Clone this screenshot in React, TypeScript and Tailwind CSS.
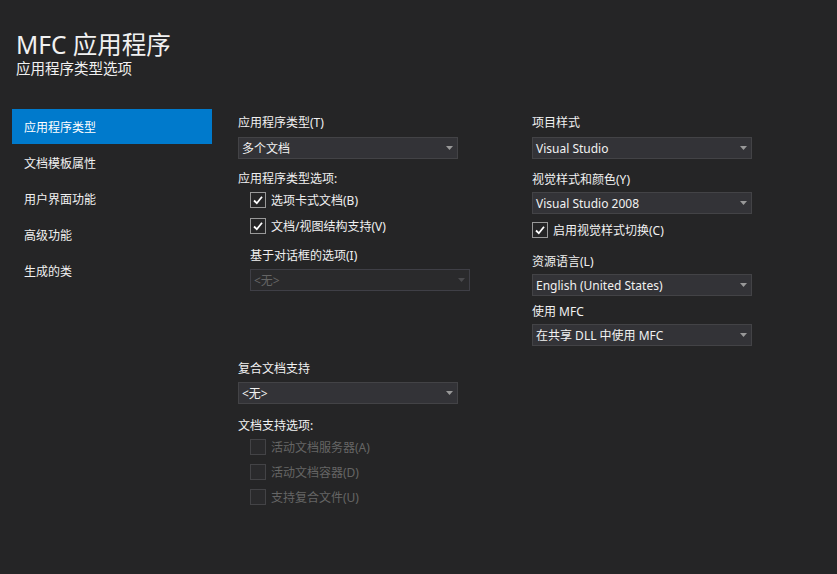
import React from 'react';

const FONT = { fontFamily: '"Noto Sans", "Noto Sans CJK SC", sans-serif' };

const Arrow: React.FC<{ disabled?: boolean }> = ({ disabled }) => (
  <svg width="7" height="4" viewBox="0 0 7 4" className="shrink-0">
    <polygon points="0,0 7,0 3.5,4" fill={disabled ? '#4a4a4d' : '#999999'} />
  </svg>
);

const Combo: React.FC<{ value: string; disabled?: boolean; className?: string }> = ({ value, disabled, className = '' }) => (
  <div
    className={`flex h-[22px] w-[220px] items-center justify-between border pl-[3px] pr-[4px] text-[12px] ${
      disabled ? 'border-[#3f3f46] bg-[#2a2a2c] text-[#656565]' : 'border-[#434346] bg-[#333337] text-[#f1f1f1]'
    } ${className}`}
  >
    <span className="pt-[2px] leading-[16px]">{value}</span>
    <Arrow disabled={disabled} />
  </div>
);

const Check: React.FC<{ label: string; checked?: boolean; disabled?: boolean; className?: string }> = ({
  label,
  checked,
  disabled,
  className = '',
}) => (
  <div className={`flex h-4 items-center gap-[5px] ${className}`}>
    <div
      className={`flex h-4 w-4 shrink-0 items-center justify-center border ${
        disabled ? 'border-[#434346] bg-[#2a2a2c]' : 'border-[#999999] bg-[#252526]'
      }`}
    >
      {checked && (
        <svg width="14" height="14" viewBox="0 0 14 14">
          <path d="M3 7.5 L5.8 10.2 L11 3.8" fill="none" stroke="#ffffff" strokeWidth="1.8" />
        </svg>
      )}
    </div>
    <span className={`h-4 text-[12px] leading-[18px] ${disabled ? 'text-[#656565]' : 'text-[#f1f1f1]'}`}>{label}</span>
  </div>
);

const Label: React.FC<{ text: string; className?: string }> = ({ text, className = '' }) => (
  <div className={`h-4 text-[12px] leading-[18px] text-[#f1f1f1] ${className}`}>{text}</div>
);

const navItems = ['应用程序类型', '文档模板属性', '用户界面功能', '高级功能', '生成的类'];

export default function App() {
  return (
    <div className="h-[574px] w-[837px] overflow-hidden bg-[#252526] text-[#f1f1f1]" style={FONT}>
      <header className="pl-4 pt-[31px]">
        <h1 className="text-[24.5px] leading-[28px] text-[#f1f1f1]">MFC 应用程序</h1>
        <p className="text-[14.5px] leading-[18px]">应用程序类型选项</p>
      </header>

      <div className="mt-[32px] flex">
        <nav className="ml-3 w-[200px]">
          {navItems.map((item, i) => (
            <div
              key={item}
              className={`mb-[1px] flex h-[35px] items-center pl-3 pt-[2px] text-[12px] ${
                i === 0 ? 'bg-[#007acc] text-white' : 'text-[#f1f1f1]'
              }`}
            >
              {item}
            </div>
          ))}
        </nav>

        <section className="ml-[26px] w-[294px] pt-[5px]">
          <Label text="应用程序类型(T)" />
          <Combo value="多个文档" className="mt-[7px]" />
          <Label text="应用程序类型选项:" className="mt-[11px]" />
          <div className="pl-3">
            <Check label="选项卡式文档(B)" checked className="mt-[6px]" />
            <Check label="文档/视图结构支持(V)" checked className="mt-[10px]" />
            <Label text="基于对话框的选项(I)" className="mt-[13px]" />
            <Combo value="<无>" disabled className="mt-[6px]" />
          </div>
          <Label text="复合文档支持" className="mt-[69px]" />
          <Combo value="<无>" className="mt-[6px]" />
          <Label text="文档支持选项:" className="mt-[13px]" />
          <div className="pl-3">
            <Check label="活动文档服务器(A)" disabled className="mt-[6px]" />
            <Check label="活动文档容器(D)" disabled className="mt-[9px]" />
            <Check label="支持复合文件(U)" disabled className="mt-[9px]" />
          </div>
        </section>

        <section className="pt-[5px]">
          <Label text="项目样式" />
          <Combo value="Visual Studio" className="mt-[7px]" />
          <Label text="视觉样式和颜色(Y)" className="mt-[12px]" />
          <Combo value="Visual Studio 2008" className="mt-[5px]" />
          <Check label="启用视觉样式切换(C)" checked className="mt-[8px]" />
          <Label text="资源语言(L)" className="mt-[15px]" />
          <Combo value="English (United States)" className="mt-[5px]" />
          <Label text="使用 MFC" className="mt-[7px]" />
          <Combo value="在共享 DLL 中使用 MFC" className="mt-[5px]" />
        </section>
      </div>
    </div>
  );
}
